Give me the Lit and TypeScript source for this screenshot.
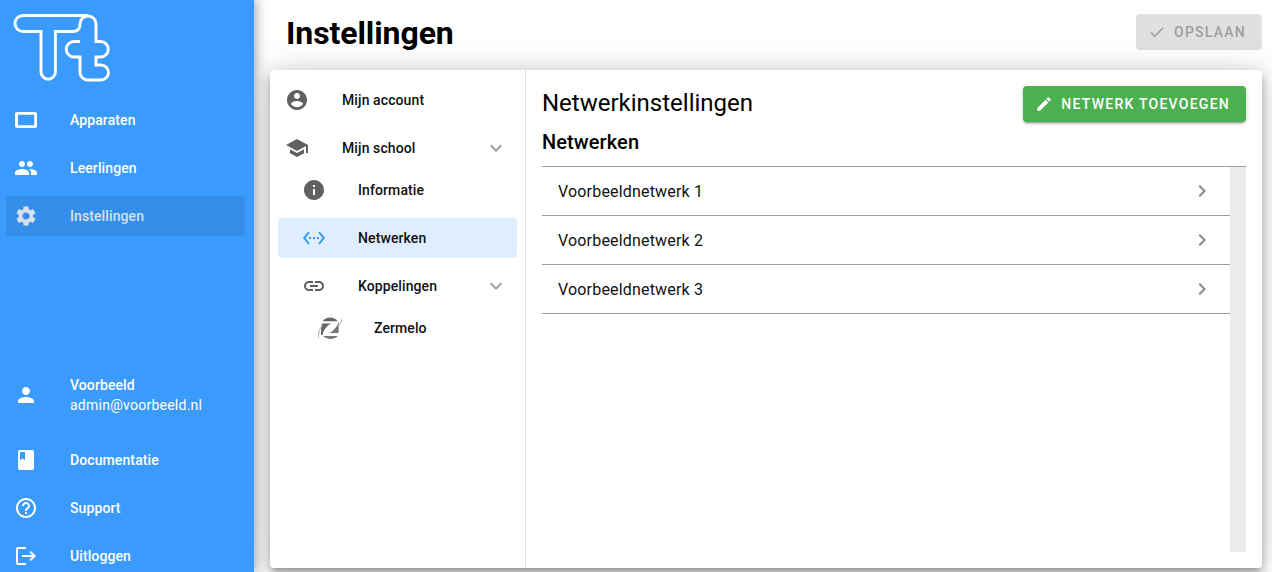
import { LitElement, html, css, svg } from "lit";
import { customElement } from "lit/decorators.js";

const P: Record<string, string> = {
  tablet: "M3 4H21C22.1 4 23 4.9 23 6V18A2 2 0 0 1 21 20H3A2 2 0 0 1 1 18V6C1 4.9 1.9 4 3 4ZM4 6.8V17.2H20.2V6.8Z",
  group: "M16 11c1.66 0 2.99-1.34 2.99-3S17.66 5 16 5c-1.66 0-3 1.34-3 3s1.34 3 3 3zm-8 0c1.66 0 2.99-1.34 2.99-3S9.66 5 8 5C6.34 5 5 6.34 5 8s1.34 3 3 3zm0 2c-2.33 0-7 1.17-7 3.5V19h14v-2.5c0-2.33-4.67-3.5-7-3.5zm8 0c-.29 0-.62.02-.97.05 1.16.84 1.97 1.97 1.97 3.45V19h6v-2.5c0-2.33-4.67-3.5-7-3.5z",
  settings: "M19.14 12.94c.04-.3.06-.61.06-.94 0-.32-.02-.64-.07-.94l2.03-1.58c.18-.14.23-.41.12-.61l-1.92-3.32c-.12-.22-.37-.29-.59-.22l-2.39.96c-.5-.38-1.03-.7-1.62-.94l-.36-2.54c-.04-.24-.24-.41-.48-.41h-3.84c-.24 0-.43.17-.47.41l-.36 2.54c-.59.24-1.13.57-1.62.94l-2.39-.96c-.22-.08-.47 0-.59.22L2.74 8.87c-.12.21-.08.47.12.61l2.03 1.58c-.05.3-.09.63-.09.94s.02.64.07.94l-2.03 1.58c-.18.14-.23.41-.12.61l1.92 3.32c.12.22.37.29.59.22l2.39-.96c.5.38 1.03.7 1.62.94l.36 2.54c.05.24.24.41.48.41h3.84c.24 0 .44-.17.47-.41l.36-2.54c.59-.24 1.13-.56 1.62-.94l2.39.96c.22.08.47 0 .59-.22l1.92-3.32c.12-.22.07-.47-.12-.61l-2.01-1.58zM12 15.6c-1.98 0-3.6-1.62-3.6-3.6s1.62-3.6 3.6-3.6 3.6 1.62 3.6 3.6-1.62 3.6-3.6 3.6z",
  person: "M12 12c2.21 0 4-1.79 4-4s-1.79-4-4-4-4 1.79-4 4 1.79 4 4 4zm0 2c-2.67 0-8 1.34-8 4v2h16v-2c0-2.66-5.33-4-8-4z",
  book: "M18 2H6c-1.1 0-2 .9-2 2v16c0 1.1.9 2 2 2h12c1.1 0 2-.9 2-2V4c0-1.1-.9-2-2-2zM6 4h5v8l-2.5-1.5L6 12V4z",
  help: "M11 18h2v-2h-2v2zm1-16C6.48 2 2 6.48 2 12s4.48 10 10 10 10-4.48 10-10S17.52 2 12 2zm0 18c-4.41 0-8-3.59-8-8s3.59-8 8-8 8 3.59 8 8-3.59 8-8 8zm0-14c-2.21 0-4 1.79-4 4h2c0-1.1.9-2 2-2s2 .9 2 2c0 2-3 1.75-3 5h2c0-2.25 3-2.5 3-5 0-2.21-1.79-4-4-4z",
  logout: "M17 7l-1.41 1.41L18.17 11H8v2h10.17l-2.58 2.58L17 17l5-5zM4 5h8V3H4c-1.1 0-2 .9-2 2v14c0 1.1.9 2 2 2h8v-2H4V5z",
  account: "M12 2C6.48 2 2 6.48 2 12s4.48 10 10 10 10-4.48 10-10S17.52 2 12 2zm0 3c1.66 0 3 1.34 3 3s-1.34 3-3 3-3-1.34-3-3 1.34-3 3-3zm0 14.2c-2.5 0-4.71-1.28-6-3.22.03-1.99 4-3.08 6-3.08 1.99 0 5.97 1.09 6 3.08-1.29 1.94-3.5 3.22-6 3.22z",
  school: "M5 13.18v4L12 21l7-3.82v-4L12 17l-7-3.82zM12 3L1 9l11 6 9-4.91V17h2V9L12 3z",
  info: "M12 2C6.48 2 2 6.48 2 12s4.48 10 10 10 10-4.48 10-10S17.52 2 12 2zm1 15h-2v-6h2v6zm0-8h-2V7h2v2z",
  ethernet: "M7.77 6.76L6.23 5.48.82 12l5.41 6.52 1.54-1.28L3.42 12l4.35-5.24zM7 13h2v-2H7v2zm10-2h-2v2h2v-2zm-6 2h2v-2h-2v2zm6.77-7.52l-1.54 1.28L20.58 12l-4.35 5.24 1.54 1.28L23.18 12l-5.41-6.52z",
  link: "M3.9 12c0-1.71 1.39-3.1 3.1-3.1h4V7H7c-2.76 0-5 2.24-5 5s2.24 5 5 5h4v-1.9H7c-1.71 0-3.1-1.39-3.1-3.1zM8 13h8v-2H8v2zm9-6h-4v1.9h4c1.71 0 3.1 1.39 3.1 3.1s-1.39 3.1-3.1 3.1h-4V17h4c2.76 0 5-2.24 5-5s-2.24-5-5-5z",
  down: "M7.41 8.59L12 13.17l4.59-4.58L18 10l-6 6-6-6 1.41-1.41z",
  right: "M8.59 16.59L13.17 12 8.59 7.41 10 6l6 6-6 6-1.41-1.41z",
  check: "M9 16.17L4.83 12l-1.42 1.41L9 19 21 7l-1.41-1.41z",
  pencil: "M3 17.25V21h3.75L17.81 9.94l-3.75-3.75L3 17.25zM20.71 7.04c.39-.39.39-1.02 0-1.41l-2.34-2.34c-.39-.39-1.02-.39-1.41 0l-1.83 1.83 3.75 3.75 1.83-1.83z",
};

const icon = (n: string, cls = "") =>
  html`<svg class="ic ${cls}" viewBox="0 0 24 24" aria-hidden="true"><path d=${P[n]} fill="currentColor"></path></svg>`;

const logo = svg`<svg class="logo" viewBox="0 0 120 96" aria-hidden="true"><path fill="none" stroke="#fff" stroke-width="2.9" d="M88 15.5H23A8 8 0 0 0 23 31.5H41V72A7.2 7.2 0 0 0 55.4 72V31.5H72.5Q80 31.5 80 24A8 8 0 0 1 96 24V41.5H100.5A7.7 7.7 0 0 1 100.5 57H96V65H101A7.5 7.5 0 0 1 101 80H88A8 8 0 0 1 80 72V57H74A7.7 7.7 0 0 1 74 41.5H80"></path></svg>`;

const zermelo = svg`<svg class="ic" viewBox="0 0 24 24" aria-hidden="true">
  <path fill="#666" d="M4.7 5.2C8 .2 16 .2 19.7 5.2Z"></path>
  <path fill="#777" d="M5 20H20C16 24 9 24 5 20Z"></path>
  <path fill="#666" d="M4 7.5H13.5C9 9.5 6 13 4.5 19H3C3 14 3.2 11 4 7.5Z"></path>
  <path fill="#777" d="M21 6L20.5 17H11.5C15 15 19 11 21 6Z"></path>
  <path fill="none" stroke="#aaa" stroke-width="1" d="M0 22.5C.5 16 2 12 4.5 9M24.3 .7C24 5 22.5 8 20 10"></path>
</svg>`;

@customElement("app-root")
export class AppRoot extends LitElement {
  static styles = css`
    :host {
      display: flex;
      height: 100vh;
      overflow: hidden;
      font-family: Roboto, "Liberation Sans", sans-serif;
      background: #fff;
      color: #111;
    }
    * { box-sizing: border-box; }
    .ic { width: 24px; height: 24px; flex: none; display: block; }

    .side {
      width: 254px;
      flex: none;
      height: 100%;
      background: #3a9bfd;
      color: #fff;
      box-shadow: 0 0 12px 2px rgba(0, 0, 0, 0.35);
      position: relative;
      z-index: 2;
      display: flex;
      flex-direction: column;
      overflow: hidden;
    }
    .logo { width: 120px; height: 96px; display: block; flex: none; }
    .nav { padding: 0 9px 0 6px; flex: none; }
    .nav-item {
      height: 48px;
      display: flex;
      align-items: center;
      padding-left: 8px;
      font-size: 14px;
      font-weight: 500;
      letter-spacing: 0.1px;
    }
    .nav-item .ic { margin-right: 32px; }
    .nav-item.on { color: rgba(255, 255, 255, 0.9); position: relative; }
    .nav-item.on::before {
      content: "";
      position: absolute;
      inset: 4px 0;
      border-radius: 4px;
      background: rgba(0, 0, 0, 0.08);
    }
    .spacer { height: 123px; flex: none; }
    .user {
      height: 64px;
      margin-bottom: 9px;
      flex: none;
    }
    .user .name { display: block; line-height: 20px; }
    .user .mail { display: block; line-height: 20px; font-weight: 400; letter-spacing: 0.25px; }

    .main { flex: 1; min-width: 0; display: flex; flex-direction: column; padding: 0 10px 4px 16px; }
    .top {
      height: 70px;
      flex: none;
      display: flex;
      justify-content: space-between;
      padding: 14px 0 0 0;
    }
    h1 {
      margin: 0;
      font-size: 32px;
      line-height: 38px;
      font-weight: 700;
      color: #000;
      padding-left: 16px;
      letter-spacing: -0.08px;
    }
    .btn {
      display: flex;
      align-items: center;
      height: 36px;
      border-radius: 4px;
      font-size: 14px;
      font-weight: 500;
      letter-spacing: 1.25px;
      white-space: nowrap;
    }
    .btn .ic { width: 18px; height: 18px; margin-right: 8px; }
    .save { background: #e0e0e0; color: #9e9e9e; padding: 0 16px 0 12px; width: 126px; }
    .add {
      background: #4caf50;
      color: #fff;
      padding: 0 16px 0 12px;
      box-shadow: 0 3px 1px -2px rgba(0, 0, 0, 0.2), 0 2px 2px rgba(0, 0, 0, 0.14), 0 1px 5px rgba(0, 0, 0, 0.12);
    }

    .card {
      flex: 1;
      min-height: 0;
      background: #fff;
      border-radius: 4px;
      box-shadow: 0 5px 5px -3px rgba(0, 0, 0, 0.2), 0 8px 10px 1px rgba(0, 0, 0, 0.14), 0 3px 14px 2px rgba(0, 0, 0, 0.12), 0 0 36px rgba(0, 0, 0, 0.14);
      display: flex;
    }
    .menu {
      width: 256px;
      flex: none;
      border-right: 1px solid #e0e0e0;
      padding: 6px 8px 0;
    }
    .row {
      display: flex;
      align-items: center;
      height: 48px;
      padding: 0 9px 0 7px;
      font-size: 14px;
      font-weight: 500;
      letter-spacing: 0.1px;
      color: #111;
    }
    .row > .ic:first-child { color: #616161; margin-right: 33px; }
    .row .chev { margin-left: auto; color: #9e9e9e; }
    .row.sub { padding-left: 24px; }
    .row.sub > .ic:first-child { margin-right: 32px; }
    .row.subsub { padding-left: 40px; }
    .row.subsub > .ic:first-child { margin-right: 32px; }
    .row.short { height: 40px; }
    .m-2 { margin-top: -2px; }
    .m8 { margin-top: 8px; }
    .m4 { margin-top: 4px; }
    .row.active { background: #deeefe; border-radius: 4px; }
    .row.active > .ic:first-child { color: #3a9bfd; }

    .content { flex: 1; min-width: 0; padding: 16px 16px 16px; display: flex; flex-direction: column; }
    .head { display: flex; justify-content: space-between; height: 36px; }
    h2 { margin: 0; font-size: 24px; line-height: 34px; font-weight: 400; color: #000; }
    h3 { margin: 4px 0 0; font-size: 20px; line-height: 32px; font-weight: 500; color: #000; letter-spacing: 0.1px; height: 40px; }
    .list { flex: 1; min-height: 0; border-top: 1px solid #9e9e9e; display: flex; }
    .rows { flex: 1; min-width: 0; }
    .track { width: 16px; flex: none; background: #ebebeb; }
    .net {
      height: 49px;
      border-bottom: 1px solid #9e9e9e;
      display: flex;
      align-items: center;
      justify-content: space-between;
      padding: 0 16px;
      font-size: 16px;
      letter-spacing: 0.18px;
      color: #111;
    }
    .net .ic { color: #8a8a8a; }
  `;

  render() {
    return html`
      <aside class="side">
        ${logo}
        <nav class="nav">
          <div class="nav-item">${icon("tablet")}<span>Apparaten</span></div>
          <div class="nav-item">${icon("group")}<span>Leerlingen</span></div>
          <div class="nav-item on">${icon("settings")}<span>Instellingen</span></div>
        </nav>
        <div class="spacer"></div>
        <nav class="nav">
          <div class="nav-item user">${icon("person")}<span><span class="name">Voorbeeld</span><span class="mail">admin@voorbeeld.nl</span></span></div>
          <div class="nav-item">${icon("book")}<span>Documentatie</span></div>
          <div class="nav-item">${icon("help")}<span>Support</span></div>
          <div class="nav-item">${icon("logout")}<span>Uitloggen</span></div>
        </nav>
      </aside>
      <main class="main">
        <header class="top">
          <h1>Instellingen</h1>
          <div class="btn save">${icon("check")}<span>OPSLAAN</span></div>
        </header>
        <section class="card">
          <div class="menu">
            <div class="row">${icon("account")}<span>Mijn account</span></div>
            <div class="row">${icon("school")}<span>Mijn school</span>${icon("down", "chev")}</div>
            <div class="row sub short m-2">${icon("info")}<span>Informatie</span></div>
            <div class="row sub short active m8">${icon("ethernet")}<span>Netwerken</span></div>
            <div class="row sub m4">${icon("link")}<span>Koppelingen</span>${icon("down", "chev")}</div>
            <div class="row subsub short m-2">${zermelo}<span>Zermelo</span></div>
          </div>
          <div class="content">
            <div class="head">
              <h2>Netwerkinstellingen</h2>
              <div class="btn add">${icon("pencil")}<span>NETWERK TOEVOEGEN</span></div>
            </div>
            <h3>Netwerken</h3>
            <div class="list">
              <div class="rows">
                <div class="net"><span>Voorbeeldnetwerk 1</span>${icon("right")}</div>
                <div class="net"><span>Voorbeeldnetwerk 2</span>${icon("right")}</div>
                <div class="net"><span>Voorbeeldnetwerk 3</span>${icon("right")}</div>
              </div>
              <div class="track"></div>
            </div>
          </div>
        </section>
      </main>
    `;
  }
}
